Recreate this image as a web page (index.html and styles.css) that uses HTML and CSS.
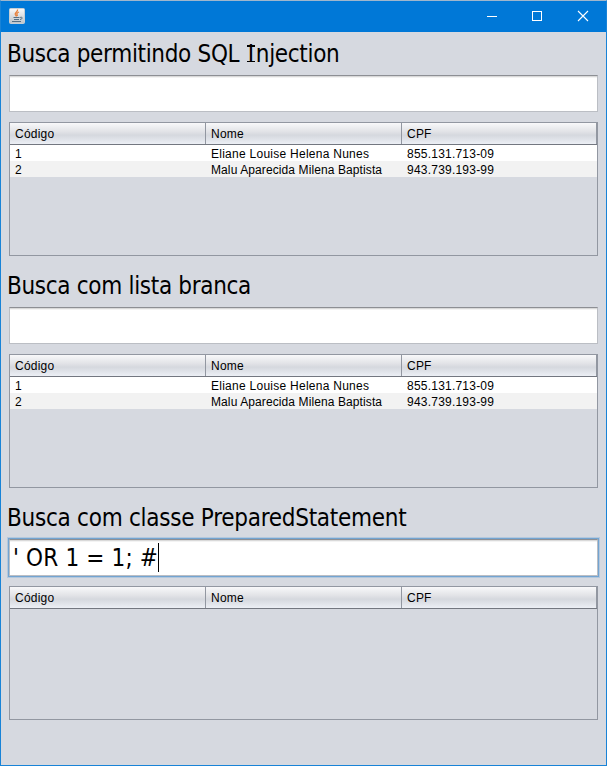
FILE: index.html
```
<!DOCTYPE html>
<html lang="pt-BR">
<head>
<meta charset="utf-8">
<title>Busca</title>
<link rel="stylesheet" href="styles.css">
</head>
<body>
<div class="window">
  <header class="titlebar">
    <svg class="app-icon" width="16" height="16" viewBox="0 0 16 16">
      <defs><linearGradient id="tile" x1="0" y1="0" x2="0" y2="1"><stop offset="0" stop-color="#fafafa"/><stop offset="1" stop-color="#bcc3c9"/></linearGradient></defs>
      <rect x=".5" y=".5" width="15" height="15" rx="1" fill="url(#tile)" stroke="#c5ced5"/>
      <path d="M8.500 1.500C9 4 5.500 4.500 6.300 6.500L7.500 8.500M10 4C7.500 5 7.500 6 8.500 8" fill="none" stroke="#e8803a" stroke-width="1.300"/>
      <path d="M4.500 9.500H10.500M5 11.500H10M3 13.500H12M11 9.500C14 8.500 14 11 11 11.500" fill="none" stroke="#557085" stroke-width="1"/>
    </svg>
    <div class="controls">
      <svg width="45" height="30" viewBox="0 0 45 30"><path d="M17 15.500H27" stroke="#fff"/></svg>
      <svg width="45" height="30" viewBox="0 0 45 30"><rect x="17.500" y="10.500" width="9" height="9" fill="none" stroke="#fff"/></svg>
      <svg width="46" height="30" viewBox="0 0 46 30"><path d="M18 10L28 20M28 10L18 20" stroke="#fff" stroke-width="1.100"/></svg>
    </div>
  </header>
  <main>
    <section>
      <h2 class="injection">Busca permitindo SQL <span class="serif-i">I</span>njection</h2>
      <div class="field"></div>
      <div class="table">
        <div class="row head"><span>Código</span><span>Nome</span><span>CPF</span></div>
        <div class="row"><span>1</span><span class="name-a">Eliane Louise Helena Nunes</span><span>855.131.713-09</span></div>
        <div class="row alt"><span>2</span><span class="name-b">Malu Aparecida Milena Baptista</span><span>943.739.193-99</span></div>
      </div>
    </section>
    <section>
      <h2 class="whitelist">Busca com lista branca</h2>
      <div class="field"></div>
      <div class="table">
        <div class="row head"><span>Código</span><span>Nome</span><span>CPF</span></div>
        <div class="row"><span>1</span><span class="name-a">Eliane Louise Helena Nunes</span><span>855.131.713-09</span></div>
        <div class="row alt"><span>2</span><span class="name-b">Malu Aparecida Milena Baptista</span><span>943.739.193-99</span></div>
      </div>
    </section>
    <section>
      <h2 class="prepared">Busca com classe PreparedStatement</h2>
      <div class="field focused"><span class="value">' OR 1 = 1; #</span><i class="caret"></i></div>
      <div class="table">
        <div class="row head"><span>Código</span><span>Nome</span><span>CPF</span></div>
      </div>
    </section>
  </main>
</div>
</body>
</html>
```
FILE: styles.css
```
* { box-sizing: border-box; }
body { margin: 0; background: #d6d9e0; color: #000; overflow: hidden; }
.window { height: 766px; border: 1px solid #1883d7; border-top-color: #9fb6cc; }
.titlebar { height: 31px; background: #0078d7; display: flex; justify-content: space-between; padding-left: 8px; }
.app-icon { margin-top: 7px; }
.controls { display: flex; }
.controls svg { display: block; }
main { padding: 0 8px; }
section { height: 232px; display: flex; flex-direction: column; }
h2 { margin: 0 0 0 -2px; height: 43px; font: 24px/44px "DejaVu Sans Condensed", "DejaVu Sans", sans-serif; font-stretch: condensed; white-space: nowrap; }
.injection { letter-spacing: -0.33px; }
.whitelist { letter-spacing: -0.32px; }
.prepared { letter-spacing: -0.27px; }
.serif-i { position: relative; padding: 0 2px; }
.serif-i::before, .serif-i::after { content: ""; position: absolute; left: 1px; right: 1px; height: 1.5px; background: #000; }
.serif-i::before { top: 5px; }
.serif-i::after { bottom: 6px; }
.field { height: 37px; flex: none; background: #fff; border: 1px solid #bbbec4; border-top-color: #8d8f94; box-shadow: inset 0 1px #d9d9d9, inset 0 2px #f3f3f3; display: flex; align-items: center; padding-left: 3px; }
.focused { box-shadow: inset 0 1px #d9d9d9, inset 0 2px #f3f3f3, 0 0 0 1px #73a4d1, 0 0 0 2px #b4c8dd; }
.value { font: 24px/36px "DejaVu Sans Condensed", "DejaVu Sans", sans-serif; font-stretch: condensed; white-space: pre; letter-spacing: 0.15px; padding-top: 1px; }
.caret { width: 1px; height: 29px; background: #000; }
.table { height: 134px; margin-top: 10px; border: 1px solid #9297a1; font: 12px/18px "Liberation Sans", Arial, sans-serif; letter-spacing: 0.22px; }
.row { display: grid; grid-template-columns: 196px 196px 1fr; height: 16px; background: #fff; }
.row span { height: 16px; padding-left: 5px; white-space: nowrap; }
.row .name-a { letter-spacing: 0.26px; }
.row .name-b { letter-spacing: 0.1px; }
.row.alt { background: #f2f2f2; }
.row.head { height: 22px; line-height: 22px; border-bottom: 1px solid #737780; background: linear-gradient(#f8f8fa 0, #e2e3e7 40%, #d5d8de 58%, #eceff5 100%); }
.row.head span { height: 21px; border-right: 1px solid #9297a1; }
```
